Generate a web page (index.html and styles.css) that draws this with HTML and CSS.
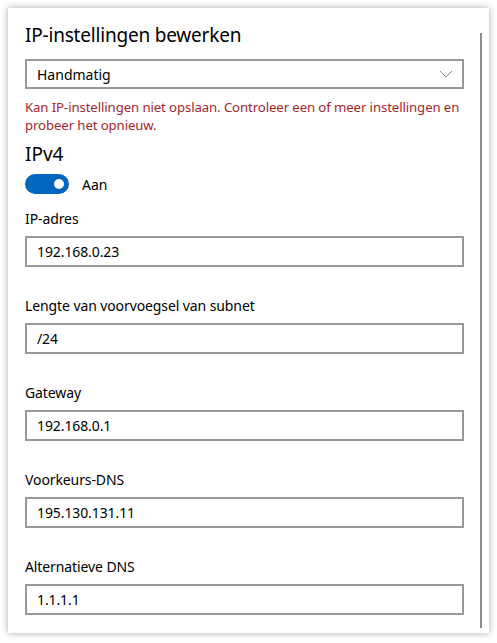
FILE: index.html
```html
<!DOCTYPE html>
<html lang="nl">
<head>
<meta charset="utf-8">
<title>IP-instellingen bewerken</title>
<link rel="stylesheet" href="styles.css">
</head>
<body>
<div class="card">
  <div class="scrollbar"></div>
  <h1 class="title">IP-instellingen bewerken</h1>
  <div class="select">
    <span>Handmatig</span>
    <svg class="chevron" width="14" height="8" viewBox="0 0 14 8"><path d="M1 1 L7 7 L13 1" fill="none" stroke="#8a8a8a" stroke-width="1"/></svg>
  </div>
  <p class="error">Kan IP-instellingen niet opslaan. Controleer een of meer instellingen en probeer het opnieuw.</p>
  <h2 class="section">IPv4</h2>
  <div class="toggle-row">
    <span class="toggle"><span class="knob"></span></span>
    <span class="toggle-label">Aan</span>
  </div>
  <div class="field">
    <div class="label">IP-adres</div>
    <div class="input">192.168.0.23</div>
  </div>
  <div class="field">
    <div class="label">Lengte van voorvoegsel van subnet</div>
    <div class="input">/24</div>
  </div>
  <div class="field">
    <div class="label">Gateway</div>
    <div class="input">192.168.0.1</div>
  </div>
  <div class="field">
    <div class="label">Voorkeurs-DNS</div>
    <div class="input">195.130.131.11</div>
  </div>
  <div class="field">
    <div class="label">Alternatieve DNS</div>
    <div class="input">1.1.1.1</div>
  </div>
</div>
</body>
</html>
```

FILE: styles.css
```css
html, body {
  margin: 0;
  padding: 0;
  background: #ffffff;
}
body {
  font-family: "Noto Sans", "Open Sans", sans-serif;
  color: #000;
  padding: 8px;
}
.card {
  position: relative;
  width: 481px;
  height: 625px;
  box-sizing: border-box;
  background: #ffffff;
  box-shadow: 0 0 7px rgba(0, 0, 0, 0.35);
  padding: 13px 0 0 17px;
  overflow: hidden;
}
.scrollbar {
  position: absolute;
  left: 472px;
  top: 25px;
  width: 2px;
  height: 595px;
  background: #8c8c8c;
}
.title {
  margin: 0;
  font-size: 19px;
  font-weight: 400;
  line-height: 28px;
  letter-spacing: -0.2px;
}
.select {
  margin-top: 10px;
  width: 439px;
  height: 30px;
  box-sizing: border-box;
  border: 2px solid #999999;
  display: flex;
  align-items: center;
  justify-content: space-between;
  padding: 0 9px 0 10px;
  font-size: 14px;
}
.chevron {
  display: block;
}
.error {
  margin: 9px 0 0 0;
  width: 445px;
  color: #a4262c;
  font-size: 13.2px;
  line-height: 18px;
  letter-spacing: -0.1px;
}
.section {
  margin: 7px 0 0 0;
  font-size: 19px;
  font-weight: 400;
  line-height: 26px;
}
.toggle-row {
  margin-top: 7px;
  display: flex;
  align-items: center;
  height: 20px;
}
.toggle {
  position: relative;
  width: 44px;
  height: 20px;
  border-radius: 10px;
  background: #0067c0;
  display: block;
}
.knob {
  position: absolute;
  right: 5px;
  top: 5px;
  width: 10px;
  height: 10px;
  border-radius: 50%;
  background: #fff;
}
.toggle-label {
  margin-left: 13px;
  font-size: 14px;
}
.field {
  margin-top: 15px;
}
.field + .field {
  margin-top: 29px;
}
.label {
  font-size: 14px;
  line-height: 20px;
  letter-spacing: -0.1px;
}
.input {
  margin-top: 7px;
  width: 439px;
  height: 31px;
  box-sizing: border-box;
  border: 2px solid #999999;
  display: flex;
  align-items: center;
  padding-left: 10px;
  font-size: 14px;
  letter-spacing: -0.1px;
}
```
